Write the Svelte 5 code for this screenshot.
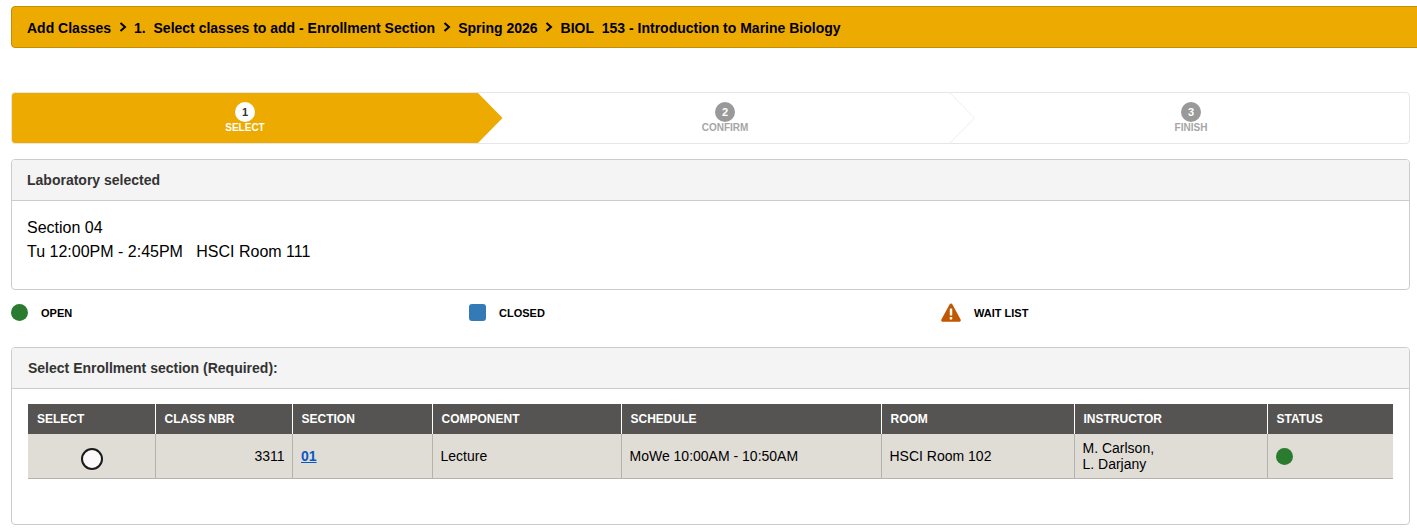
<script>
	const crumbs = [
		'Add Classes',
		'1.\u00a0 Select classes to add - Enrollment Section',
		'Spring 2026',
		'BIOL\u00a0 153 - Introduction to Marine Biology'
	];
	const steps = [
		{ num: 1, label: 'SELECT' },
		{ num: 2, label: 'CONFIRM' },
		{ num: 3, label: 'FINISH' }
	];
	const columns = ['SELECT', 'CLASS NBR', 'SECTION', 'COMPONENT', 'SCHEDULE', 'ROOM', 'INSTRUCTOR', 'STATUS'];
</script>

<div class="page">
	<nav class="breadcrumb">
		{#each crumbs as crumb, i}
			{#if i > 0}
				<svg class="chevron" width="8" height="10" viewBox="0 0 8 10" fill="none" stroke="#000" stroke-width="2">
					<polyline points="1.5 1 6 5 1.5 9" />
				</svg>
			{/if}
			<span>{crumb}</span>
		{/each}
	</nav>

	<div class="steps">
		{#each steps as step, i}
			<div class="step" class:active={i === 0}>
				<span class="num">{step.num}</span>
				<span class="label">{step.label}</span>
				{#if i < steps.length - 1}
					<svg class="arrow" width="25" height="50" viewBox="0 0 25 50">
						<polygon points="0,0 24.5,25 0,50" fill={i === 0 ? '#edaa00' : '#fff'} />
						{#if i > 0}
							<polyline points="0,0 24.5,25 0,50" fill="none" stroke="#eeeeee" stroke-width="1" />
						{/if}
					</svg>
				{/if}
			</div>
		{/each}
	</div>

	<section class="panel first">
		<h2 class="panel-head">Laboratory selected</h2>
		<div class="lab-body">
			<div>Section 04</div>
			<div>Tu 12:00PM - 2:45PM &nbsp; HSCI Room 111</div>
		</div>
	</section>

	<div class="legend">
		<div class="legend-item">
			<span class="dot"></span>
			<span class="legend-label">OPEN</span>
		</div>
		<div class="legend-item">
			<span class="square"></span>
			<span class="legend-label">CLOSED</span>
		</div>
		<div class="legend-item">
			<svg width="20" height="19" viewBox="0 0 21 19" preserveAspectRatio="none">
				<path d="M10.5 0.5 C11.2 0.5 11.7 0.9 12 1.5 L20.6 16.4 C21.2 17.5 20.5 18.8 19.2 18.8 L1.8 18.8 C0.5 18.8 -0.2 17.5 0.4 16.4 L9 1.5 C9.3 0.9 9.8 0.5 10.5 0.5 Z" fill="#c25700" />
				<rect x="9.2" y="5.5" width="2.6" height="7" rx="0.6" fill="#fff" />
				<rect x="9.2" y="14" width="2.6" height="2.6" rx="0.6" fill="#fff" />
			</svg>
			<span class="legend-label">WAIT LIST</span>
		</div>
	</div>

	<section class="panel second">
		<h2 class="panel-head enroll">Select Enrollment section (Required):</h2>
		<div class="table-body">
			<table>
				<thead>
					<tr>
						{#each columns as col}
							<th>{col}</th>
						{/each}
					</tr>
				</thead>
				<tbody>
					<tr>
						<td class="select-cell"><span class="radio"></span></td>
						<td class="nbr">3311</td>
						<td><a href="#section">01</a></td>
						<td>Lecture</td>
						<td>MoWe 10:00AM - 10:50AM</td>
						<td>HSCI Room 102</td>
						<td class="instructor">M. Carlson,<br />L. Darjany</td>
						<td><span class="dot status"></span></td>
					</tr>
				</tbody>
			</table>
		</div>
	</section>
</div>

<style>
	:global(body) {
		margin: 0;
		background: #fff;
		font-family: 'Liberation Sans', Arial, sans-serif;
		color: #000;
	}

	.page {
		padding: 6px 7px 0 11px;
		height: 524px;
		overflow: hidden;
	}

	.breadcrumb {
		display: flex;
		align-items: center;
		gap: 7.5px;
		box-sizing: border-box;
		height: 42px;
		width: 1420px;
		padding: 1px 15px 0;
		background: #edaa00;
		border: 1px solid #c58d00;
		border-radius: 4px;
		font-size: 14px;
		font-weight: 700;
	}

	.chevron {
		margin-top: -1px;
	}

	.steps {
		display: grid;
		grid-template-columns: 466px 472px 1fr;
		box-sizing: border-box;
		height: 52px;
		margin-top: 44px;
		border: 1px solid #e6e6e6;
		border-radius: 4px;
	}

	.step {
		position: relative;
		display: flex;
		flex-direction: column;
		align-items: center;
		padding: 9px 0 0;
	}

	.step + .step {
		padding-left: 22px;
	}

	.step:last-child {
		padding-left: 23px;
	}

	.step.active {
		background: #edaa00;
		border-radius: 3px 0 0 3px;
	}

	.num {
		display: flex;
		align-items: center;
		justify-content: center;
		width: 20px;
		height: 20px;
		border-radius: 50%;
		background: #999;
		color: #fff;
		font-size: 11px;
		font-weight: 700;
	}

	.active .num {
		background: #fff;
		color: #333;
	}

	.label {
		font-size: 10px;
		line-height: 12px;
		font-weight: 700;
		color: #a6a6a6;
	}

	.active .label {
		color: #fff;
	}

	.arrow {
		position: absolute;
		top: 0;
		left: 100%;
		z-index: 1;
	}

	.panel {
		box-sizing: border-box;
		border: 1px solid #ccc;
		border-radius: 4px;
	}

	.panel.first {
		height: 131px;
		margin-top: 15px;
	}

	.panel.second {
		height: 178px;
	}

	.panel-head {
		box-sizing: border-box;
		height: 41px;
		margin: 0;
		padding: 0 15px;
		background: #f4f4f4;
		border-bottom: 1px solid #ccc;
		border-radius: 3px 3px 0 0;
		color: #333;
		font-size: 14px;
		font-weight: 700;
		line-height: 40px;
	}

	.panel-head.enroll {
		padding-left: 16px;
	}

	.lab-body {
		padding: 15px 15px 0;
		font-size: 16px;
		line-height: 24px;
	}

	.legend {
		display: grid;
		grid-template-columns: 458px 472px 1fr;
		align-items: center;
		box-sizing: border-box;
		height: 57px;
		padding-bottom: 12px;
	}

	.legend-item {
		display: flex;
		align-items: center;
	}

	.legend-label {
		margin-left: 13px;
		font-size: 11px;
		font-weight: 700;
	}

	.dot {
		display: inline-block;
		width: 17px;
		height: 17px;
		border-radius: 50%;
		background: #2a7a30;
	}

	.square {
		display: inline-block;
		width: 17px;
		height: 17px;
		border-radius: 3px;
		background: #337ab7;
	}

	.table-body {
		padding: 15px 16px 0;
	}

	table {
		width: 1365px;
		table-layout: fixed;
		border-collapse: collapse;
		font-size: 14px;
	}

	th:nth-child(1) { width: 127px; }
	th:nth-child(2) { width: 137px; }
	th:nth-child(3) { width: 140px; }
	th:nth-child(4) { width: 189px; }
	th:nth-child(5) { width: 260px; }
	th:nth-child(6) { width: 193px; }
	th:nth-child(7) { width: 193px; }

	th {
		box-sizing: border-box;
		height: 30px;
		padding: 0 9px;
		background: #555452;
		border-left: 1px solid #fff;
		color: #fff;
		font-size: 12px;
		font-weight: 700;
		text-align: left;
		vertical-align: middle;
	}

	th:first-child {
		border-left: none;
	}

	td {
		box-sizing: border-box;
		height: 44px;
		padding: 1px 8px 0;
		background: #e0ddd7;
		border-bottom: 1px solid #b4b2ac;
		border-left: 1px solid #b4b2ac;
		line-height: 16px;
		vertical-align: middle;
	}

	td:first-child {
		border-left: none;
	}

	.nbr {
		text-align: right;
		padding-right: 7px;
	}

	a {
		margin-left: 0.5px;
		color: #0b57c2;
		font-weight: 700;
		text-decoration: underline;
	}

	.select-cell {
		padding: 7px 0 0 2px;
	}

	.radio {
		display: block;
		box-sizing: border-box;
		width: 22px;
		height: 22px;
		margin: 0 auto;
		border: 2px solid #1a1a1a;
		border-radius: 50%;
		background: #fafafa;
	}

	.instructor {
		padding-top: 0;
	}

	.status {
		display: block;
	}
</style>
